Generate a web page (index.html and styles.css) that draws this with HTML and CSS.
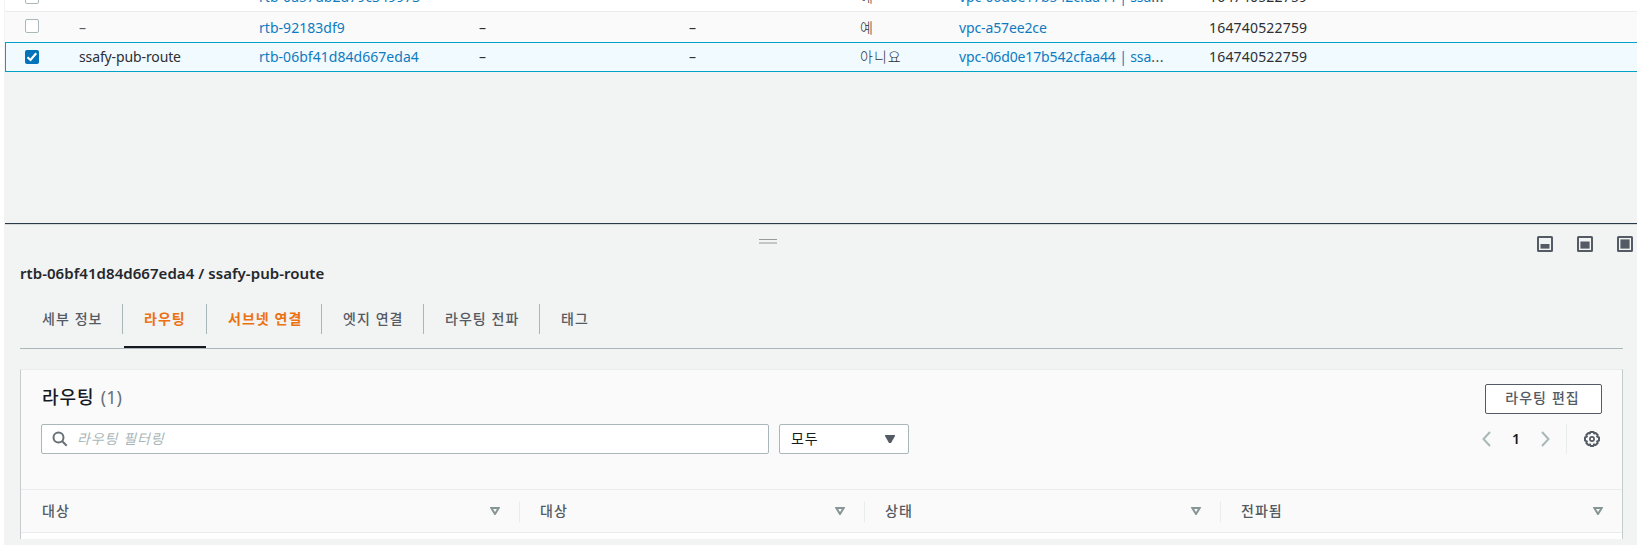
FILE: index.html
```html
<!DOCTYPE html>
<html lang="ko">
<head>
<meta charset="utf-8">
<title>라우팅 테이블</title>
<link rel="stylesheet" href="styles.css">
</head>
<body>
<div class="app">
  <div class="table">
    <div class="row row-first">
      <span class="check"></span><span></span><a class="id">rtb-0a57db2d79c349973</a><span></span><span></span><span class="ko">예</span><a class="vpc">vpc-06d0e17b542cfaa44 | ssa<i class="dots">...</i></a><span class="owner">164740522759</span>
    </div>
    <div class="row row-alt">
      <span class="check"></span><span class="muted">–</span><a class="id">rtb-92183df9</a><span>–</span><span>–</span><span class="ko">예</span><a class="vpc">vpc-a57ee2ce</a><span class="owner">164740522759</span>
    </div>
    <div class="row row-selected">
      <span class="check checked"><svg width="14" height="14" viewBox="0 0 14 14"><path d="M2.500 7.300 5.500 10 11.200 3.300" fill="none" stroke="#fff" stroke-width="2.200"/></svg></span><span class="name">ssafy-pub-route</span><a class="id">rtb-06bf41d84d667eda4</a><span>–</span><span>–</span><span class="ko">아니요</span><a class="vpc">vpc-06d0e17b542cfaa44 | ssa<i class="dots">...</i></a><span class="owner">164740522759</span>
    </div>
  </div>
  <section class="panel">
    <div class="panel-bar">
      <svg class="grip" width="18" height="6" viewBox="0 0 18 6"><path d="M0 0h18v1H0z" fill="#999"/><path d="M0 3h18v2H0z" fill="#c4c5c5"/></svg>
      <div class="sizes">
        <svg width="16" height="16" viewBox="0 0 16 16"><rect x="1" y="1" width="14" height="14" rx=".5" fill="none" stroke="#545b64" stroke-width="2"/><path d="M3.500 8h9v4.600h-9z" fill="#545b64"/></svg>
        <svg width="16" height="16" viewBox="0 0 16 16"><rect x="1" y="1" width="14" height="14" rx=".5" fill="none" stroke="#545b64" stroke-width="2"/><path d="M3.400 5.500h9.200v7.100H3.400z" fill="#545b64"/></svg>
        <svg width="16" height="16" viewBox="0 0 16 16"><rect x="1" y="1" width="14" height="14" rx=".5" fill="none" stroke="#545b64" stroke-width="2"/><path d="M3.400 3.400h9.200v9.200H3.400z" fill="#545b64"/></svg>
      </div>
    </div>
    <h2 class="title">rtb-06bf41d84d667eda4 / ssafy-pub-route</h2>
    <nav class="tabs">
      <a class="tab t1">세부 정보</a><a class="tab t2 hot active">라우팅</a><a class="tab t3 hot">서브넷 연결</a><a class="tab t4">엣지 연결</a><a class="tab t5">라우팅 전파</a><a class="tab t6">태그</a>
    </nav>
    <div class="card">
      <div class="card-head">
        <h3>라우팅 <span class="count">(1)</span></h3>
        <button class="edit">라우팅 편집</button>
      </div>
      <div class="filters">
        <div class="search">
          <svg width="16" height="16" viewBox="0 0 16 16"><circle cx="6.500" cy="6.500" r="5" fill="none" stroke="#687078" stroke-width="2"/><path d="M10 10l4.700 4.700" stroke="#687078" stroke-width="2"/></svg>
          <span>라우팅 필터링</span>
        </div>
        <div class="select"><span>모두</span><svg width="10" height="8" viewBox="0 0 10 8"><path d="M0 0h10v1L6 8H4L0 1z" fill="#545b64"/></svg></div>
        <div class="pager">
          <svg width="9" height="16" viewBox="0 0 9 16"><path d="M8 1 1.500 8 8 15" fill="none" stroke="#aab7b8" stroke-width="2"/></svg>
          <b>1</b>
          <svg width="9" height="16" viewBox="0 0 9 16"><path d="M1 1 7.500 8 1 15" fill="none" stroke="#aab7b8" stroke-width="2"/></svg>
          <div class="gear"><svg width="16" height="16" viewBox="0 0 16 16" fill="none" stroke="#545b64"><path stroke-width="2" stroke-linejoin="round" d="M6.400 1h3.200l.5 1.500 1.500-.6 2.100 2.100-.6 1.600 1.900.8v3.200l-1.900.8.6 1.600-2.100 2.100-1.600-.7-.6 1.600H6.600L6 13.400l-1.600.7L2.300 12l.6-1.600L1 9.600V6.400l1.900-.8L2.300 4l2.100-2.100 1.500.6z"/><circle cx="8" cy="8" r="2.100" stroke-width="1.700"/></svg></div>
        </div>
      </div>
      <div class="cols">
        <div><span>대상</span><svg width="10" height="8" viewBox="0 0 10 8"><path d="M1.300 1h7.400L5 7z" fill="none" stroke="#879596" stroke-width="2"/></svg></div>
        <div><span>대상</span><svg width="10" height="8" viewBox="0 0 10 8"><path d="M1.300 1h7.400L5 7z" fill="none" stroke="#879596" stroke-width="2"/></svg></div>
        <div><span>상태</span><svg width="10" height="8" viewBox="0 0 10 8"><path d="M1.300 1h7.400L5 7z" fill="none" stroke="#879596" stroke-width="2"/></svg></div>
        <div><span>전파됨</span><svg width="10" height="8" viewBox="0 0 10 8"><path d="M1.300 1h7.400L5 7z" fill="none" stroke="#879596" stroke-width="2"/></svg></div>
      </div>
    </div>
  </section>
</div>
</body>
</html>
```
FILE: styles.css
```css
* { box-sizing: border-box; }
body { margin: 0; background: #fff; font: 14px/22px "Noto Sans", "Noto Sans CJK KR", sans-serif; color: #16191f; }
svg { display: block; flex: none; }
.app { margin-left: 4px; height: 545px; overflow: hidden; background: #f2f3f3; }
.table { margin-left: 1px; height: 222px; overflow: hidden; }
.row { display: grid; grid-template-columns: 74px 180px 220px 210px 171px 99px 250px 1fr; height: 30px; align-items: center; white-space: nowrap; color: #2c2f35; }
.row a { color: #0f7bbf; }
.row-first { margin-top: -18px; background: #fff; border-bottom: 1px solid #eaeded; }
.row-alt { background: #fafafa; }
.row-alt > span, .row-alt > a { padding-top: 1px; }
.row-selected { background: #f1faff; border: 1px solid #00a1c9; border-right: 0; grid-template-columns: 73px 180px 220px 210px 171px 99px 250px 1fr; }
.check { width: 14px; height: 14px; margin-left: 20px; border: 1px solid #aab7b8; border-radius: 2px; background: #fff; }
.row-alt .check { margin-bottom: 2px; }
.row-selected .check { margin: 0 0 1px 19px; }
.check.checked { border: 0; background: #0073bb; }
.muted { color: #545b64; }
.id { letter-spacing: .04px; }
.name { letter-spacing: -.12px; }
.vpc { letter-spacing: -.13px; }
.owner { letter-spacing: .18px; }
.dots { font-style: normal; color: #16191f; opacity: .8; letter-spacing: .6px; }
.ko { font-family: "Noto Sans CJK KR", sans-serif; font-weight: 300; letter-spacing: 1px; padding-bottom: 2px; }
.panel { margin-left: 1px; height: 316px; border-top: 1px solid #2a3b47; box-shadow: inset 0 1px #d5dbdb; padding: 0 14px 0 15px; overflow: hidden; margin-top: 1px; }
.panel-bar { position: relative; height: 38px; }
.grip { position: absolute; left: 739px; top: 15px; }
.sizes { position: absolute; right: -10px; top: 12px; display: flex; gap: 24px; }
.title { margin: 0; font-size: 15px; line-height: 22px; font-weight: 600; letter-spacing: .05px; white-space: nowrap; color: #24272c; }
.tabs { display: flex; height: 65px; border-bottom: 1px solid #aab7b8; padding-top: 20px; font-family: "Noto Sans CJK KR", sans-serif; font-weight: 500; color: #545b64; white-space: nowrap; }
.tab { position: relative; height: 30px; line-height: 28px; padding-left: 22px; border-right: 1px solid #aab7b8; letter-spacing: 1px; }
.t1 { width: 103px; } .t2 { width: 84px; } .t3 { width: 115px; } .t4 { width: 102px; } .t5 { width: 116px; }
.t2, .t3, .t4, .t5, .t6 { padding-left: 21px; }
.tab:last-child { border: 0; }
.hot { color: #ec7211; font-weight: 700; }
.active::after { content: ""; position: absolute; left: 1px; right: 0; bottom: -14px; height: 2px; background: #16191f; }
.card { margin-top: 20px; height: 171px; border: 1px solid #c6cdce; border-top-color: #eaeded; border-bottom: 0; background: #fafafa; font-family: "Noto Sans CJK KR", sans-serif; }
.card-head { display: flex; justify-content: space-between; padding: 14px 20px 0 21px; height: 54px; }
.card h3 { margin: -2px 0 0; font-size: 18px; line-height: 28px; font-weight: 500; letter-spacing: 1px; }
.count { font-family: "Noto Sans", sans-serif; font-weight: 400; color: #687078; letter-spacing: 0; }
.edit { width: 117px; height: 30px; padding: 0 2px 3px 0; background: #fff; border: 1px solid #545b64; border-radius: 2px; color: #545b64; font: 500 14px/25px "Noto Sans CJK KR", sans-serif; letter-spacing: 1px; }
.filters { display: flex; padding: 0 20px; height: 65px; }
.search, .select { display: flex; align-items: center; height: 30px; background: #fff; border: 1px solid #aab7b8; border-radius: 2px; }
.search { width: 728px; padding-left: 10px; gap: 9px; color: #aab7b8; font-style: italic; letter-spacing: .9px; }
.search span, .select span { padding-bottom: 2px; }
.select { width: 130px; margin-left: 10px; padding: 0 13px 0 11px; justify-content: space-between; letter-spacing: .8px; }
.pager { display: flex; align-items: center; margin-left: auto; height: 30px; }
.pager b { width: 50px; text-align: center; font: 600 14px/22px "Noto Sans", sans-serif; }
.gear { display: flex; align-items: center; height: 30px; margin-left: 16px; padding-left: 17px; margin-right: 2px; border-left: 1px solid #eaeded; }
.cols { display: grid; grid-template-columns: 499px 345px 356px 1fr; height: 44px; border-top: 1px solid #eaeded; border-bottom: 1px solid #eaeded; align-items: center; color: #545b64; font-weight: 500; letter-spacing: 1px; }
.cols div { display: flex; height: 21px; align-items: center; justify-content: space-between; padding: 0 19px 0 20px; border-right: 1px solid #eaeded; }
.cols div:first-child { padding-left: 21px; }
.cols div:last-child { border: 0; }
.cols span { padding-bottom: 2px; }
.card::after { content: ""; display: block; height: 6px; background: #fff; }
```
